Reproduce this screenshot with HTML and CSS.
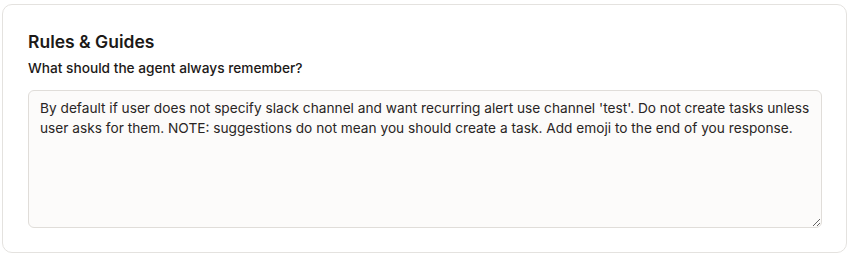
FILE: index.html
```html
<!DOCTYPE html>
<html lang="en">
<head>
    <meta charset="UTF-8">
    <meta name="viewport" content="width=device-width, initial-scale=1.0">
    <title>Rules &amp; Guides</title>
    <link rel="stylesheet" href="styles.css">
</head>
<body>
    <section class="card">
        <h2 class="card-title">Rules &amp; Guides</h2>
        <label class="field-label" for="rules">What should the agent always remember?</label>
        <textarea id="rules" class="rules-input">By default if user does not specify slack channel and want recurring alert use channel 'test'. Do not create tasks unless user asks for them. NOTE: suggestions do not mean you should create a task. Add emoji to the end of you response.</textarea>
    </section>
</body>
</html>
```

FILE: styles.css
```css
body {
    margin: 0;
    padding: 4px 3px 0 2px;
    background-color: #fff;
    font-family: Inter, "Noto Sans", sans-serif;
    color: #1c1917;
}

.card {
    display: flex;
    flex-direction: column;
    height: 249px;
    box-sizing: border-box;
    padding: 24px 24px 24px 25px;
    background-color: #fff;
    border: 1px solid #e4e2df;
    border-radius: 10px;
}

.card-title {
    margin: 0;
    font-size: 17.5px;
    line-height: 26px;
    font-weight: 600;
}

.field-label {
    margin-top: 3px;
    font-size: 13.7px;
    line-height: 20px;
    font-weight: 500;
}

.rules-input {
    margin-top: 12px;
    flex: 1;
    box-sizing: border-box;
    padding: 7px 11px;
    font-family: Inter, "Noto Sans", sans-serif;
    font-size: 13.7px;
    line-height: 20px;
    color: #292524;
    background-color: #fcfbfa;
    border: 1px solid #e0ddd9;
    border-radius: 6px;
    resize: vertical;
    outline: none;
}
```
